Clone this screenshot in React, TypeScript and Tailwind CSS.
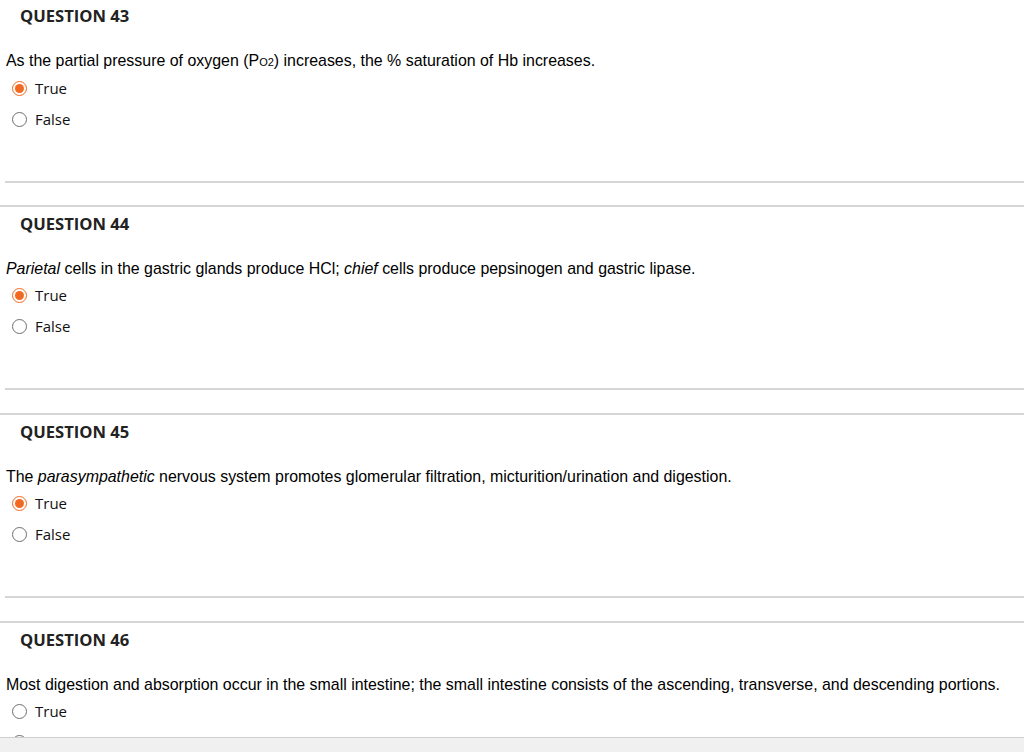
import React from "react";

type Q = {
  n: number;
  text: React.ReactNode;
  selected: "True" | "False" | null;
};

const questions: Q[] = [
  {
    n: 43,
    text: (
      <>
        As the partial pressure of oxygen (P<span className="text-[11px]">O2</span>) increases, the % saturation of Hb increases.
      </>
    ),
    selected: "True",
  },
  {
    n: 44,
    text: (
      <>
        <i>Parietal</i> cells in the gastric glands produce HCl; <i>chief</i> cells produce pepsinogen and gastric lipase.
      </>
    ),
    selected: "True",
  },
  {
    n: 45,
    text: (
      <>
        The <i>parasympathetic</i> nervous system promotes glomerular filtration, micturition/urination and digestion.
      </>
    ),
    selected: "True",
  },
  {
    n: 46,
    text: (
      <>
        Most digestion and absorption occur in the small intestine; the small intestine consists of the ascending, transverse, and descending portions.
      </>
    ),
    selected: null,
  },
];

function Radio({ checked }: { checked: boolean }) {
  return checked ? (
    <span className="flex h-[15px] w-[15px] items-center justify-center rounded-full border-[1.5px] border-[#f06a22] bg-white">
      <span className="h-[9px] w-[9px] rounded-full bg-[#f26a21]" />
    </span>
  ) : (
    <span className="h-[15px] w-[15px] rounded-full border border-[#6f6f6f] bg-white" />
  );
}

function Option({ label, checked }: { label: string; checked: boolean }) {
  return (
    <div className="flex h-[31px] items-center gap-[8px] pl-[7px]">
      <Radio checked={checked} />
      <span className="text-[15px] text-[#111]" style={{ fontFamily: '"Open Sans", sans-serif' }}>
        {label}
      </span>
    </div>
  );
}

function Question({ q, first }: { q: Q; first: boolean }) {
  return (
    <div className={first ? "mt-[-1px] h-[206px]" : "h-[208px] border-t-2 border-[#d6d6d6]"}>
      <div
        className="pl-[20px] pt-[6px] text-[16.6px] font-bold leading-[22px] text-[#222]"
        style={{ fontFamily: '"Open Sans", sans-serif' }}
      >
        QUESTION {q.n}
      </div>
      <div className="pl-[5px]">
        <div
          className="mt-[25px] pl-[1px] text-[15.93px] leading-[18px] text-black"
          style={{ fontFamily: '"Liberation Sans", Arial, sans-serif' }}
        >
          {q.text}
        </div>
        <div className="mt-[2px]">
          <Option label="True" checked={q.selected === "True"} />
          <Option label="False" checked={q.selected === "False"} />
        </div>
        <div className="mt-[46px] border-t-2 border-[#d6d6d6]" />
      </div>
    </div>
  );
}

export default function App() {
  return (
    <div className="relative h-[752px] w-[1024px] overflow-hidden bg-white">
      {questions.map((q, i) => (
        <Question key={q.n} q={q} first={i === 0} />
      ))}
      <div className="absolute bottom-0 left-0 h-[15px] w-full border-t border-[#cfcfcf] bg-[#f0f0f0]" />
    </div>
  );
}
